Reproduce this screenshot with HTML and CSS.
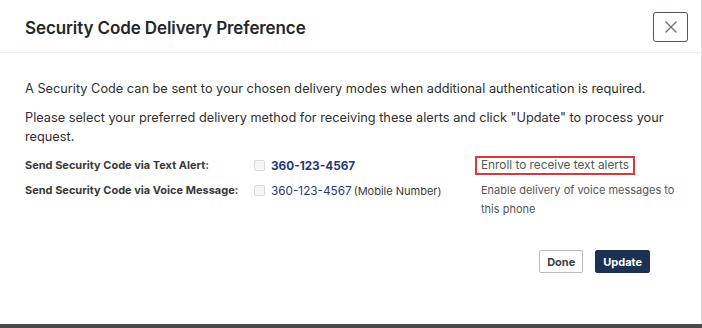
FILE: index.html
```html
<!DOCTYPE html>
<html>
<head>
<meta charset="utf-8">
<link rel="stylesheet" href="styles.css">
</head>
<body>
<div class="modal">
  <div class="header">
    <h1 class="title">Security Code Delivery Preference</h1>
    <button class="close" aria-label="Close">
      <svg width="14" height="14" viewBox="0 0 14 14"><path d="M1.5 1.5 L12.5 12.5 M12.5 1.5 L1.5 12.5" stroke="#6b6f76" stroke-width="1.3" fill="none"/></svg>
    </button>
  </div>
  <div class="body">
    <p class="intro">A Security Code can be sent to your chosen delivery modes when additional authentication is required.</p>
    <p class="intro">Please select your preferred delivery method for receiving these alerts and click "Update" to process your request.</p>
    <div class="options">
      <div class="label">Send Security Code via Text Alert:</div>
      <div class="phone"><span class="check"></span><span class="num strong">360-123-4567</span></div>
      <div class="note"><span class="enroll">Enroll to receive text alerts</span></div>
      <div class="label">Send Security Code via Voice Message:</div>
      <div class="phone"><span class="check"></span><span class="num">360-123-4567</span> <span class="mobile">(Mobile Number)</span></div>
      <div class="note">Enable delivery of voice messages to this phone</div>
    </div>
    <div class="actions">
      <button class="btn btn-done">Done</button>
      <button class="btn btn-update">Update</button>
    </div>
  </div>
</div>
<div class="bottom"></div>
</body>
</html>
```
FILE: styles.css
```css
html, body {
  margin: 0;
  padding: 0;
  background: #fff;
}
body {
  width: 702px;
  height: 328px;
  display: flex;
  flex-direction: column;
  font-family: Inter, "Noto Sans", sans-serif;
  color: #2b2b2b;
  overflow: hidden;
}
.modal {
  flex: 1;
  display: flex;
  flex-direction: column;
  border-right: 1px solid #e4e4e4;
}
.header {
  height: 53px;
  box-sizing: border-box;
  display: flex;
  align-items: center;
  justify-content: space-between;
  padding: 4px 13px 0 25px;
  border-bottom: 1px solid #ececec;
}
.title {
  margin: 0;
  font-size: 17px;
  font-weight: 600;
  color: #23272e;
  letter-spacing: -0.1px;
}
.close {
  width: 35px;
  height: 30px;
  margin-top: -3px;
  border: 1.5px solid #4a5568;
  border-radius: 3px;
  background: #fff;
  display: flex;
  align-items: center;
  justify-content: center;
  padding: 0;
}
.body {
  padding: 26px 25px 0 25px;
}
.intro {
  margin: 0 0 10px 0;
  font-size: 12.75px;
  line-height: 19px;
  color: #2f2f2f;
}
.options {
  display: grid;
  grid-template-columns: 229px 227px 1fr;
  row-gap: 6px;
  margin-top: 2px;
  font-size: 11px;
}
.label {
  font-weight: 700;
  color: #3a3a3a;
  line-height: 19px;
}
.phone {
  display: flex;
  align-items: center;
  height: 19px;
}
.check {
  width: 9px;
  height: 9px;
  border: 1px solid #d9d9d9;
  border-radius: 2px;
  background: #f6f6f6;
  margin-right: 6px;
}
.num {
  color: #1f3b73;
  font-size: 11.75px;
}
.num.strong { font-weight: 700; }
.mobile {
  color: #3a3a3a;
  margin-left: 2px;
}
.note {
  color: #555;
  line-height: 19px;
}
.enroll {
  display: inline-block;
  border: 2px solid #d63a3a;
  padding: 0 4px;
  margin-left: -6px;
  line-height: 15px;
  font-size: 11.8px;
}
.actions {
  display: flex;
  justify-content: flex-end;
  gap: 12px;
  margin-top: 31px;
  padding-right: 26px;
}
.btn {
  font-family: inherit;
  font-size: 11px;
  font-weight: 700;
  height: 23px;
  border-radius: 2px;
  padding: 0 7px;
}
.btn-done {
  background: #fff;
  color: #3a3f47;
  border: 1px solid #b8bcc2;
}
.btn-update {
  background: #1c3153;
  color: #fff;
  border: 1px solid #1c3153;
}
.bottom {
  height: 4px;
  background: #4a4a4a;
}
```
